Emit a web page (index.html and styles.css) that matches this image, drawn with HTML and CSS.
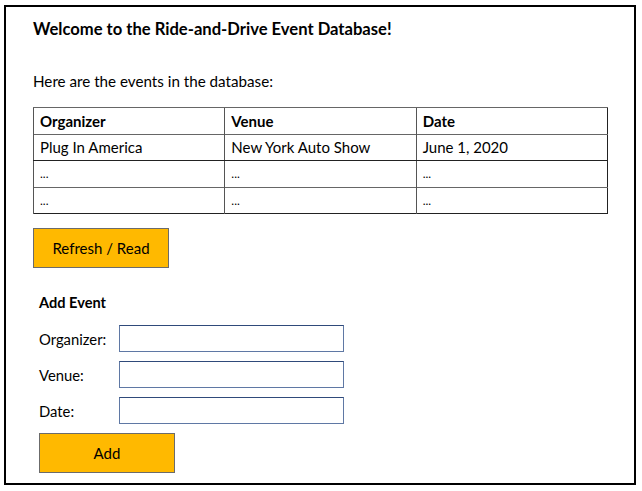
FILE: index.html
```html
<!DOCTYPE html>
<html>
<head>
<meta charset="utf-8">
<link rel="stylesheet" href="styles.css">
</head>
<body>
<div class="frame">
  <h1 class="title">Welcome to the Ride-and-Drive Event Database!</h1>
  <p class="intro">Here are the events in the database:</p>
  <table class="events">
    <tr class="head"><th>Organizer</th><th>Venue</th><th>Date</th></tr>
    <tr class="first"><td>Plug In America</td><td>New York Auto Show</td><td>June 1, 2020</td></tr>
    <tr><td class="dots">...</td><td class="dots">...</td><td class="dots">...</td></tr>
    <tr><td class="dots">...</td><td class="dots">...</td><td class="dots">...</td></tr>
  </table>
  <button class="btn refresh">Refresh / Read</button>
  <div class="add">
    <h2 class="add-title">Add Event</h2>
    <div class="field"><span class="label">Organizer:</span><span class="input"></span></div>
    <div class="field"><span class="label">Venue:</span><span class="input"></span></div>
    <div class="field"><span class="label">Date:</span><span class="input"></span></div>
    <button class="btn addbtn">Add</button>
  </div>
</div>
</body>
</html>
```
FILE: styles.css
```css
* { box-sizing: border-box; }
body {
  margin: 0;
  background: #fff;
  font-family: Lato, "Open Sans", sans-serif;
  color: #000;
}
.frame {
  margin: 5px 0 0 4px;
  width: 632px;
  height: 480px;
  border: 2px solid #000;
  padding: 12px 0 0 27px;
}
.title {
  margin: 0;
  font-size: 16.6px;
  font-weight: 700;
  line-height: 20px;
}
.intro {
  margin: 32px 0 0;
  font-size: 15.2px;
  line-height: 20px;
}
.events {
  margin-top: 16px;
  width: 575px;
  border-collapse: collapse;
  border: 1.5px solid #222;
  font-size: 15px;
}
.events th, .events td {
  width: 191px;
  height: 26.5px;
  padding: 0 6px;
  text-align: left;
  border-left: 1.5px solid #555;
  border-top: 1px solid #666;
}
.events th { font-weight: 700; }
.events tr.first td { border-bottom: 1.5px solid #222; }
.events td.dots { font-size: 12px; }
.btn {
  display: block;
  background: #ffb900;
  border: 1px solid #6b6b6b;
  font-family: inherit;
  font-size: 15px;
  color: #000;
  padding: 0;
}
.refresh {
  margin-top: 14px;
  width: 136px;
  height: 40px;
}
.add { padding-left: 6px; }
.add-title {
  margin: 25px 0 0;
  font-size: 14.6px;
  font-weight: 700;
  line-height: 20px;
}
.field {
  display: flex;
  align-items: center;
  margin-top: 12px;
}
.field + .field { margin-top: 9px; }
.label {
  width: 80px;
  font-size: 14.8px;
}
.input {
  display: block;
  width: 225px;
  height: 27px;
  border: 1px solid #5f78a4;
  border-top-color: #2f4a7a;
}
.addbtn {
  margin-top: 9px;
  width: 136px;
  height: 40px;
}
```
